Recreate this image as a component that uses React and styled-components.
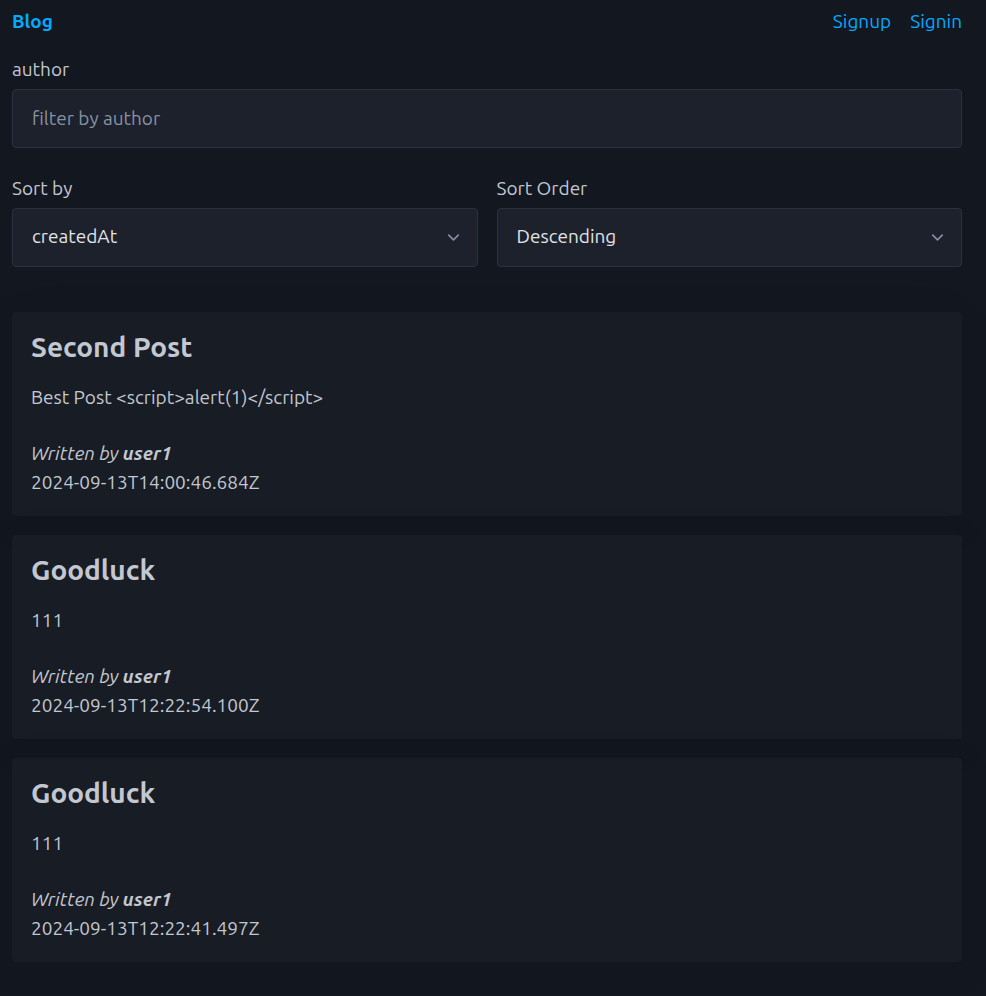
import React, { useState } from "react";
import styled, { createGlobalStyle } from "styled-components";

const GlobalStyle = createGlobalStyle`
  *, *::before, *::after { box-sizing: border-box; }
  body {
    margin: 0;
    background: #13171f;
    color: #c2c7d0;
    font-family: Ubuntu, "Noto Sans", sans-serif;
    font-size: 19px;
    line-height: 28px;
  }
`;

const Page = styled.div`
  padding: 7px 24px 32px 12px;
`;

const Header = styled.header`
  display: flex;
  justify-content: space-between;
  margin-bottom: 20px;
`;

const Nav = styled.nav`
  display: flex;
  gap: 19px;
`;

const NavLink = styled.a`
  color: #01aaff;
  font-weight: ${(p) => (p.$brand ? 700 : 400)};
  text-decoration: none;
`;

const Filters = styled.form`
  display: grid;
  gap: 26px;
  margin-bottom: 45px;
`;

const Columns = styled.div`
  display: grid;
  grid-template-columns: 1fr 1fr;
  gap: 19px;
`;

const Field = styled.div`
  display: grid;
  gap: 6px;
`;

const Label = styled.label`
  display: block;
`;

const Input = styled.input`
  width: 100%;
  height: 59px;
  padding: 0 19px 2px;
  border: 1px solid #2a3140;
  border-radius: 4px;
  background: #1c212c;
  color: #e0e3e7;
  font: inherit;

  &::placeholder {
    color: #8891a4;
    opacity: 1;
  }
`;

const SelectBox = styled.div`
  position: relative;
`;

const Select = styled(Input).attrs({ as: "select" })`
  display: block;
  padding-bottom: 4px;
  appearance: none;
`;

const Chevron = styled.svg`
  position: absolute;
  top: 20px;
  right: 15px;
  width: 19px;
  height: 19px;
  fill: none;
  stroke: #8891a4;
  stroke-width: 2;
  stroke-linecap: round;
  stroke-linejoin: round;
  pointer-events: none;
`;

const Posts = styled.main`
  display: grid;
  gap: 19px;
`;

const Card = styled.article`
  padding: 19px;
  border-radius: 4px;
  background: #181c25;
  box-shadow: 0 8px 48px rgba(7, 9, 12, 0.06);
`;

const Title = styled.h3`
  margin: 0 0 20px;
  font-size: 28px;
  font-weight: 700;
  line-height: 32px;
`;

const Content = styled.p`
  margin: 0 0 28px;
`;

const Meta = styled.footer`
  line-height: 29px;
`;

const Author = styled.em`
  display: block;
`;

const posts = [
  {
    title: "Second Post",
    content: "Best Post <script>alert(1)</script>",
    author: "user1",
    createdAt: "2024-09-13T14:00:46.684Z",
  },
  {
    title: "Goodluck",
    content: "111",
    author: "user1",
    createdAt: "2024-09-13T12:22:54.100Z",
  },
  {
    title: "Goodluck",
    content: "111",
    author: "user1",
    createdAt: "2024-09-13T12:22:41.497Z",
  },
];

function SelectField({ id, label, options }) {
  const [value, setValue] = useState(options[0]);
  return (
    <Field>
      <Label htmlFor={id}>{label}</Label>
      <SelectBox>
        <Select id={id} value={value} onChange={(e) => setValue(e.target.value)}>
          {options.map((option) => (
            <option key={option}>{option}</option>
          ))}
        </Select>
        <Chevron viewBox="0 0 24 24" aria-hidden="true">
          <polyline points="6 9 12 15 18 9" />
        </Chevron>
      </SelectBox>
    </Field>
  );
}

export default function App() {
  const [author, setAuthor] = useState("");
  return (
    <Page>
      <GlobalStyle />
      <Header>
        <NavLink $brand href="#">Blog</NavLink>
        <Nav>
          <NavLink href="#signup">Signup</NavLink>
          <NavLink href="#signin">Signin</NavLink>
        </Nav>
      </Header>
      <Filters onSubmit={(e) => e.preventDefault()}>
        <Field>
          <Label htmlFor="author">author</Label>
          <Input
            id="author"
            type="text"
            placeholder="filter by author"
            value={author}
            onChange={(e) => setAuthor(e.target.value)}
          />
        </Field>
        <Columns>
          <SelectField id="sort-by" label="Sort by" options={["createdAt", "updatedAt"]} />
          <SelectField id="sort-order" label="Sort Order" options={["Descending", "Ascending"]} />
        </Columns>
      </Filters>
      <Posts>
        {posts.map((post) => (
          <Card key={post.createdAt}>
            <Title>{post.title}</Title>
            <Content>{post.content}</Content>
            <Meta>
              <Author>
                Written by <strong>{post.author}</strong>
              </Author>
              <time dateTime={post.createdAt}>{post.createdAt}</time>
            </Meta>
          </Card>
        ))}
      </Posts>
    </Page>
  );
}
